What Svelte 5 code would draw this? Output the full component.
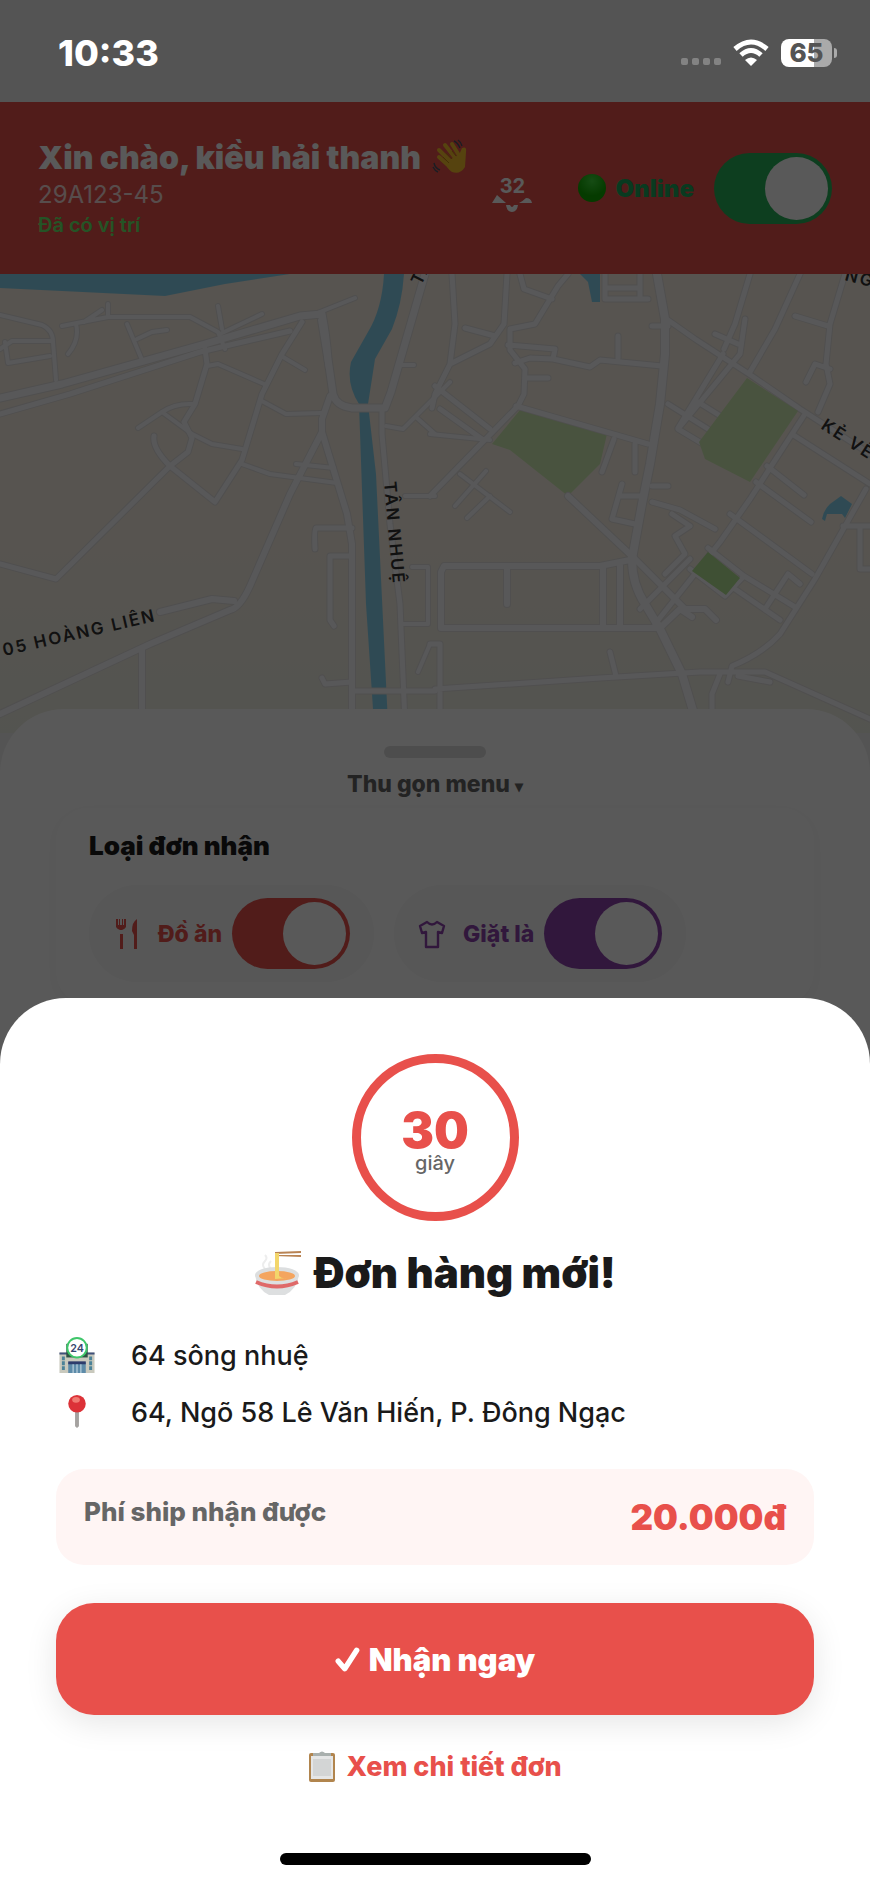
<script lang="ts">
  interface Road {
    d: string;
    w: number;
  }

  // map coordinates: 870 wide, one unit per pixel
  const roads: Road[] = [
    { d: 'M0 124L62 110 205 70 300 42 322 40Q326 60 328 85L333 120Q336 132 352 134L385 134 391 118 425 0', w: 7 },
    { d: 'M0 140L70 120 200 78 290 57', w: 5 },
    { d: 'M310 42L355 24M320 46L328 95M225 75L218 58 190 43 108 43 82 48 62 52M108 43V30M84 48L102 36M222 55L218 32M220 60L262 40M127 50L142 86M137 65L152 58 167 56M76 50Q80 66 68 80', w: 4 },
    { d: 'M0 41L42 51Q53 56 53 68L56 106M0 75L12 67H52M5 68L8 89 50 82', w: 4 },
    { d: 'M302 48L282 80 262 120 242 186 215 228 170 192Q152 174 154 162M205 75L207 90 195 130 184 148 192 164 188 178 170 192 56 305 0 290', w: 5 },
    { d: 'M138 154L162 138Q175 129 193 130M162 138L192 160 212 170 242 175M207 92L218 90 264 110M260 126L286 140 322 139M283 83L305 96M242 190L270 200 337 209M296 190L334 194', w: 4 },
    { d: 'M330 122L322 145 322 158 347 240 352 270V450M322 158L290 220 250 312Q240 334 230 336L150 370 0 440M160 338L212 325 234 327M142 374V450', w: 6 },
    { d: 'M382 138V160L390 250 400 330 405 450M352 254H316Q314 256 315 275M350 282H330V346L334 352M322 404L325 410 352 408M352 417H435', w: 5 },
    { d: 'M386 152L403 155 420 138 450 108M417 144L435 160M398 91H414M405 222H435M412 293H428V350H402M430 370L418 398', w: 4 },
    { d: 'M452 0L455 50 450 90 435 120 432 134M507 0L504 50 490 70 450 90M465 54L495 62M520 0L524 15 552 25M568 0L558 12 535 50 510 55V76L525 95 524 120 518 132 430 222', w: 5 },
    { d: 'M508 71L555 75 553 85 530 84 515 89M553 85L590 93 600 86 662 92M618 62V84M526 104H548M516 132L648 170M435 112L490 155M440 135L482 165', w: 5 },
    { d: 'M430 160L490 166M460 200L510 238M486 197L455 232M490 222L467 244', w: 4 },
    { d: 'M657 0L665 45 665 80 660 130 650 190 642 230 632 285 Q632 310 645 330L660 355 682 400 697 450', w: 8 },
    { d: 'M668 46L695 65 752 102 800 135 870 180M652 52H668M605 0V25H648M605 14H640M640 0V22', w: 5 },
    { d: 'M750 0L735 50 724 75M800 0L775 55 750 98M715 60L738 70M745 45L740 80 678 155 703 170M723 80L678 154M668 130L708 155M698 128L722 143M845 0L830 50 826 90 830 110 818 138M795 42L828 52M830 95L815 90 806 108', w: 5 },
    { d: 'M805 140L792 160 750 225 720 268 690 306 655 350M795 162L870 210M767 192L804 221M756 208L811 248M730 240L812 300M652 228L680 236 715 255', w: 5 },
    { d: 'M866 215L815 305 780 360Q762 380 732 392L728 408M708 274L744 302 795 333M690 295L725 322 744 302M735 315L780 346M765 335L788 300 800 310M843 252H870M860 252V295H870', w: 5 },
    { d: 'M568 222L635 285 685 335 705 335 716 346M635 285L600 292H444L441 298V354H660L680 335 692 343M507 292V330M603 292V354M620 290V354', w: 6 },
    { d: 'M435 415L600 404 700 398 765 398 870 445M720 400L712 420V450M610 378L616 402M738 402L770 408M430 370H440V450M622 210L612 245 635 250M620 222H640M652 212H668M614 165L602 198M635 170V198', w: 5 },
    { d: 'M672 240L690 252 675 262 685 280 665 300M640 335L690 285', w: 5 }
  ];

  const services = [
    { name: 'Đồ ăn', icon: 'food', on: true },
    { name: 'Giặt là', icon: 'shirt', on: true }
  ];

  let online = true;
  let seconds = 30;
</script>

<div class="screen">
  <div class="app">
    <header class="topbar">
      <div class="driver">
        <h1>
          Xin chào, kiều hải thanh
          <svg class="emoji" viewBox="0 0 40 38" aria-hidden="true">
            <path d="M8 18L18 27M8 11L21 24M14 6L25 20M21 5L29 18" stroke="#f5c02c" stroke-width="4" stroke-linecap="round" />
            <path d="M14 23L28 16 31 9Q36 7 35 13L34 28Q29 36 21 33Q16 30 14 23Z" fill="#f5c02c" />
            <path d="M12 18L18 24M15 14L21 20M21 12L25 17" stroke="#c38613" stroke-width="1" fill="none" />
            <path d="M23 2Q27 4 29 9M27 1Q30 3 31 7M3 24Q4 29 9 31M2 28Q4 32 7 33" stroke="#4c5566" stroke-width="1.4" fill="none" />
          </svg>
        </h1>
        <p class="plate">29A123-45</p>
        <p class="located">Đã có vị trí</p>
      </div>
      <button class="bell" aria-label="Thông báo">
        <span class="count">32</span>
        <svg viewBox="0 0 40 18" aria-hidden="true">
          <path d="M0 8L5 0 14 8ZM40 8Q39 3 34 3Q31 6 27 8Z" />
          <path d="M14 10H26Q25 17 20 17Q15 17 14 10ZM18 10Q20 14 22 10Z" fill-rule="evenodd" />
        </svg>
      </button>
      <label class="online">
        <span class="dot"></span>
        <span class="online-text">Online</span>
        <input class="switch green" type="checkbox" bind:checked={online} />
      </label>
    </header>

    <div class="map">
      <svg viewBox="0 0 870 470" preserveAspectRatio="xMidYMin slice" role="img" aria-label="Bản đồ">
        <g class="water">
          <path d="M0 0H290L225 10 165 22 0 14Z" />
          <path d="M384 0H404Q402 30 392 55L375 85Q372 105 368 130L376 200 388 450H374L366 330 359 130Q346 110 351 88L368 58Q382 35 384 0Z" />
          <path d="M580 0H600V28H592L588 8ZM841 222L830 230Q823 237 822 245L825 247 827 240H842L845 244 852 230Z" />
        </g>
        <path class="park" d="M520 136L607 160 600 190 568 222 510 176 492 170Z" />
        <g class="casing">
          {#each roads as road}
            <path d={road.d} stroke-width={road.w + 2} />
          {/each}
        </g>
        <g class="road">
          {#each roads as road}
            <path d={road.d} stroke-width={road.w} />
          {/each}
        </g>
        <path class="park" d="M747 104L798 137 750 208 705 185 699 168Z" />
        <path class="grove" d="M708 278L740 304 726 321 692 297Z" />
        <g class="street">
          <text transform="translate(4 382) rotate(-13)">05 HOÀNG LIÊN</text>
          <text transform="translate(384 208) rotate(85)">TÂN NHUỆ</text>
          <text transform="translate(820 154) rotate(33)">KẺ VẼ</text>
          <text transform="translate(421 12) rotate(-64)">TÂN</text>
          <text transform="translate(844 6) rotate(15)">NG</text>
        </g>
      </svg>
    </div>

    <section class="menu">
      <button class="collapse"><span class="handle"></span>Thu gọn menu <small>▾</small></button>
      <div class="card">
        <h2>Loại đơn nhận</h2>
        <div class="chips">
          {#each services as service}
            <label class="chip {service.icon}">
              {#if service.icon === 'food'}
                <svg viewBox="0 0 28 32" aria-hidden="true">
                  <path d="M3 1V9Q4 11 7 12H9Q12 11 13 9V1H11V7H10V1H9V7H7V1H6V7H5V1ZM7 16H10V31H7ZM24 1Q19 4 19 13L21 17V31H24Z" fill="currentColor" />
                </svg>
              {:else}
                <svg viewBox="0 0 28 32" aria-hidden="true">
                  <path d="M9 4L2 8 4 15 8 14V29H20V14L24 15 26 8 19 4Q14 9 9 4Z" fill="none" stroke="currentColor" stroke-width="2.4" stroke-linejoin="round" />
                </svg>
              {/if}
              <span>{service.name}</span>
              <input class="switch" type="checkbox" bind:checked={service.on} />
            </label>
          {/each}
        </div>
      </div>
    </section>
  </div>

  <div class="overlay">
    <div class="statusbar">
      <span class="time">10:33</span>
      <div class="status-icons">
        <span class="signal"><i></i><i></i><i></i><i></i></span>
        <svg class="wifi" viewBox="0 0 36 28" aria-hidden="true">
          <path d="M2 10Q18-4 34 10M8 16Q18 7 28 16" fill="none" stroke="#fff" stroke-width="5" />
          <path d="M12 21Q18 16 24 21L18 27Z" fill="#fff" />
        </svg>
        <span class="battery">65</span>
      </div>
    </div>

    <div class="sheet" role="dialog" aria-labelledby="order-title">
      <div class="countdown">
        <strong>{seconds}</strong>
        <span>giây</span>
      </div>

      <h2 class="order-title" id="order-title">
        <svg viewBox="0 0 48 48" aria-hidden="true">
          <path d="M21 3L47 2V4L21 5ZM21 6L47 6V8L21 7Z" fill="#b98353" />
          <path d="M11 20Q7 16 11 12Q14 9 11 6M17 20Q13 16 17 12" stroke="#ededed" stroke-width="2" fill="none" />
          <ellipse cx="23" cy="26" rx="22" ry="8" fill="#dcdedf" />
          <path d="M1 26Q3 40 15 46H31Q43 40 45 26Z" fill="#dddfe0" />
          <ellipse cx="23" cy="27" rx="18" ry="5" fill="#f4a55f" />
          <path d="M21 4H25V27Q28 30 33 29L21 30Z" fill="#f3d66b" />
          <path d="M2 33Q23 42 44 33" stroke="#df6969" stroke-width="4" fill="none" />
        </svg>
        Đơn hàng mới!
      </h2>

      <ul class="stops">
        <li>
          <svg viewBox="0 0 36 38" aria-hidden="true">
            <path d="M0 16H36V37H0Z" fill="#c9c9bd" />
            <path d="M0 16H36V18H0Z" fill="#40517a" />
            <path d="M7 7H29V21H7Z" fill="#2e5144" />
            <circle cx="18" cy="11" r="10" fill="#fff" stroke="#3fc66a" stroke-width="2" />
            <path d="M9 26H27V37H9Z" fill="#5d8ba9" />
            <path d="M9 25H27V28H9Z" fill="#2d3c6c" />
            <path d="M4 20V35M32 20V35" stroke="#4b8298" stroke-width="3" stroke-dasharray="4 1" />
            <path d="M14 28V37M18 28V37M22 28V37" stroke="#cfe0e8" />
            <text x="18" y="15" text-anchor="middle">24</text>
          </svg>
          64 sông nhuệ
        </li>
        <li>
          <svg viewBox="0 0 36 38" aria-hidden="true">
            <path d="M16 17H20V33L18 35 16 33Z" fill="#a5a2a0" />
            <circle cx="18" cy="10" r="9" fill="#dc3238" />
            <ellipse cx="17" cy="6" rx="4" ry="3" fill="#f07a72" />
          </svg>
          64, Ngõ 58 Lê Văn Hiến, P. Đông Ngạc
        </li>
      </ul>

      <div class="fee">
        <span>Phí ship nhận được</span>
        <strong>20.000đ</strong>
      </div>

      <button class="accept">
        <svg viewBox="0 0 24 24" aria-hidden="true">
          <path d="M3 14L9 21 20 4" fill="none" stroke="#fff" stroke-width="5" stroke-linecap="round" stroke-linejoin="round" />
        </svg>
        Nhận ngay
      </button>

      <a class="details" href="#details">
        <svg viewBox="0 0 28 32" aria-hidden="true">
          <rect x="1" y="2" width="26" height="29" rx="2" fill="#b1854e" />
          <path d="M3 5H25V28H3Z" fill="#e5e6e6" />
          <path d="M5 8H23V25H5Z" fill="#d3d5d5" />
          <path d="M5 2H11Q14-1 17 2H23V5H5Z" fill="#a9b0ae" />
        </svg>
        Xem chi tiết đơn
      </a>
      <div class="home"></div>
    </div>
  </div>
</div>

<style>
  :global(body) {
    margin: 0;
    background: #fff;
  }

  .screen {
    display: grid;
    min-height: 100vh;
    overflow: hidden;
    font-family: Inter, 'Noto Sans', sans-serif;
    color: #1a1a1a;
  }

  .app,
  .overlay {
    grid-area: 1 / 1;
    min-width: 0;
    display: flex;
    flex-direction: column;
  }

  h1,
  h2,
  p,
  ul {
    margin: 0;
    padding: 0;
  }

  button {
    border: 0;
    padding: 0;
    background: none;
    font-family: inherit;
    cursor: pointer;
  }

  .app {
    background: #f1f1f1;
    padding-top: 102px;
  }

  .topbar {
    display: flex;
    align-items: center;
    height: 172px;
    padding: 0 38px;
    box-sizing: border-box;
    background: #e8504b;
    color: #fff;
  }

  .driver {
    flex: 1;
    white-space: nowrap;
  }

  .driver h1 {
    display: flex;
    align-items: center;
    gap: 10px;
    font-size: 32px;
    line-height: 40px;
    font-weight: 900;
  }

  .emoji {
    width: 40px;
    height: 38px;
  }

  .plate {
    font-size: 24px;
    line-height: 34px;
    opacity: 0.8;
  }

  .located {
    font-size: 20px;
    line-height: 26px;
    font-weight: 600;
    color: #69f06e;
  }

  .bell {
    display: flex;
    flex-direction: column;
    align-items: center;
    margin-right: 46px;
    padding-top: 14px;
    color: #fff;
  }

  .bell .count {
    font-size: 20px;
    line-height: 18px;
    font-weight: 700;
  }

  .bell svg {
    width: 40px;
    height: 18px;
    fill: currentColor;
  }

  .online {
    display: flex;
    align-items: center;
  }

  .dot {
    width: 28px;
    height: 28px;
    margin-right: 9px;
    border-radius: 50%;
    background: radial-gradient(circle at 50% 25%, #3fd83a, #0fa800 60%);
  }

  .online-text {
    margin-right: 20px;
    font-size: 24px;
    font-weight: 900;
    color: #1ba75c;
  }

  .switch {
    appearance: none;
    display: flex;
    flex: none;
    width: 118px;
    height: 71px;
    margin: 0;
    padding: 4px;
    box-sizing: border-box;
    border-radius: 36px;
    background: #ccc;
    color: inherit;
    cursor: pointer;
  }

  .switch::before {
    content: '';
    width: 63px;
    border-radius: 50%;
    background: #fff;
  }

  .switch:checked {
    justify-content: flex-end;
    background: currentColor;
  }

  .switch.green {
    color: #27b35b;
  }

  .map {
    height: 459px;
    overflow: hidden;
    background: linear-gradient(#f8f0e4 60%, #eeefe4);
  }

  .map svg {
    display: block;
    width: 100%;
    height: 470px;
  }

  .water {
    fill: #88d5f0;
  }

  .park {
    fill: #d1edb5;
  }

  .grove {
    fill: #b4e494;
  }

  .casing path,
  .road path {
    fill: none;
    stroke: #e4e2e2;
    stroke-linejoin: round;
    stroke-linecap: round;
  }

  .road path {
    stroke: #fcfcff;
  }

  .street text {
    font-size: 17px;
    font-weight: 600;
    letter-spacing: 2px;
    fill: #333;
  }

  .menu {
    flex: 1;
    margin-top: -24px;
    padding: 37px 56px 0;
    border-radius: 64px 64px 0 0;
    background: #fff;
  }

  .collapse {
    display: block;
    width: 100%;
    font-size: 23px;
    line-height: 28px;
    font-weight: 800;
    color: #666;
  }

  .collapse small {
    font-size: 16px;
  }

  .handle {
    display: block;
    width: 102px;
    height: 12px;
    margin: 0 auto 12px;
    border-radius: 6px;
    background: #ddd;
  }

  .card {
    margin-top: 8px;
    padding: 22px 33px;
    border-radius: 32px;
    box-shadow: 0 4px 16px rgba(0, 0, 0, 0.04);
  }

  .card h2 {
    font-size: 26px;
    line-height: 32px;
    font-weight: 900;
  }

  .chips {
    display: flex;
    gap: 20px;
    margin-top: 23px;
  }

  .chip {
    display: flex;
    align-items: center;
    padding: 13px 24px;
    border-radius: 48px;
    background: #f8f8f8;
    font-size: 23px;
    font-weight: 800;
  }

  .chip svg {
    width: 28px;
    height: 32px;
    margin-right: 17px;
  }

  .chip span {
    margin-right: 10px;
  }

  .food {
    color: #e8504b;
  }

  .shirt {
    color: #8e44ad;
  }

  .overlay {
    z-index: 1;
    justify-content: space-between;
    background: rgba(0, 0, 0, 0.65);
  }

  .statusbar {
    display: flex;
    justify-content: space-between;
    align-items: center;
    height: 106px;
    padding: 0 38px 0 58px;
    color: #fff;
  }

  .time {
    font-size: 36px;
    font-weight: 800;
  }

  .status-icons {
    display: flex;
    align-items: center;
    gap: 12px;
  }

  .signal {
    display: flex;
    gap: 4px;
    padding-top: 16px;
  }

  .signal i {
    width: 7px;
    height: 7px;
    border-radius: 2px;
    background: #838383;
  }

  .wifi {
    width: 36px;
    height: 28px;
  }

  .battery {
    position: relative;
    width: 51px;
    border-radius: 8px;
    background: linear-gradient(90deg, #fff 65%, #aaa 65%);
    color: #545454;
    font-size: 26px;
    line-height: 28px;
    font-weight: 800;
    text-align: center;
  }

  .battery::after {
    content: '';
    position: absolute;
    right: -5px;
    top: 9px;
    width: 3px;
    height: 10px;
    border-radius: 0 4px 4px 0;
    background: #aaa;
  }

  .sheet {
    display: flex;
    flex-direction: column;
    padding: 56px 56px 19px;
    border-radius: 66px 66px 0 0;
    background: #fff;
  }

  .countdown {
    display: flex;
    flex-direction: column;
    align-items: center;
    justify-content: center;
    align-self: center;
    width: 167px;
    height: 167px;
    padding-top: 10px;
    box-sizing: border-box;
    border: 9px solid #e8504b;
    border-radius: 50%;
  }

  .countdown strong {
    font-size: 49px;
    line-height: 40px;
    font-weight: 900;
    color: #e8504b;
  }

  .countdown span {
    font-size: 20px;
    line-height: 24px;
    font-weight: 500;
    color: #666;
  }

  .order-title {
    display: flex;
    align-items: center;
    justify-content: center;
    gap: 12px;
    margin-top: 26px;
    font-size: 42px;
    line-height: 52px;
    font-weight: 900;
  }

  .order-title svg {
    width: 48px;
    height: 48px;
  }

  .stops {
    margin-top: 38px;
    list-style: none;
    font-size: 27px;
    line-height: 37px;
    font-weight: 500;
  }

  .stops li {
    display: flex;
    align-items: center;
    gap: 36px;
    margin-bottom: 20px;
    padding-left: 3px;
  }

  .stops svg {
    flex: none;
    width: 36px;
    height: 37px;
  }

  .stops text {
    font-size: 11px;
    font-weight: 600;
    fill: #35456f;
  }

  .fee {
    display: flex;
    justify-content: space-between;
    margin-top: 18px;
    padding: 24px 28px;
    border-radius: 28px;
    background: #fff5f4;
  }

  .fee span {
    font-size: 26px;
    line-height: 38px;
    font-weight: 800;
    color: #666;
  }

  .fee strong {
    font-size: 35px;
    line-height: 48px;
    font-weight: 900;
    color: #e8504b;
  }

  .accept {
    display: flex;
    align-items: center;
    justify-content: center;
    gap: 8px;
    height: 112px;
    margin-top: 38px;
    border-radius: 38px;
    background: #e8504b;
    box-shadow: 0 8px 32px rgba(0, 0, 0, 0.1);
    color: #fff;
    font-size: 31px;
    font-weight: 900;
  }

  .accept svg {
    width: 26px;
    height: 26px;
  }

  .details {
    display: flex;
    align-items: center;
    align-self: center;
    gap: 10px;
    margin-top: 34px;
    font-size: 27px;
    line-height: 36px;
    font-weight: 800;
    color: #e8504b;
    text-decoration: none;
  }

  .details svg {
    width: 28px;
    height: 32px;
  }

  .home {
    align-self: center;
    width: 311px;
    height: 12px;
    margin-top: 68px;
    border-radius: 6px;
    background: #000;
  }
</style>
